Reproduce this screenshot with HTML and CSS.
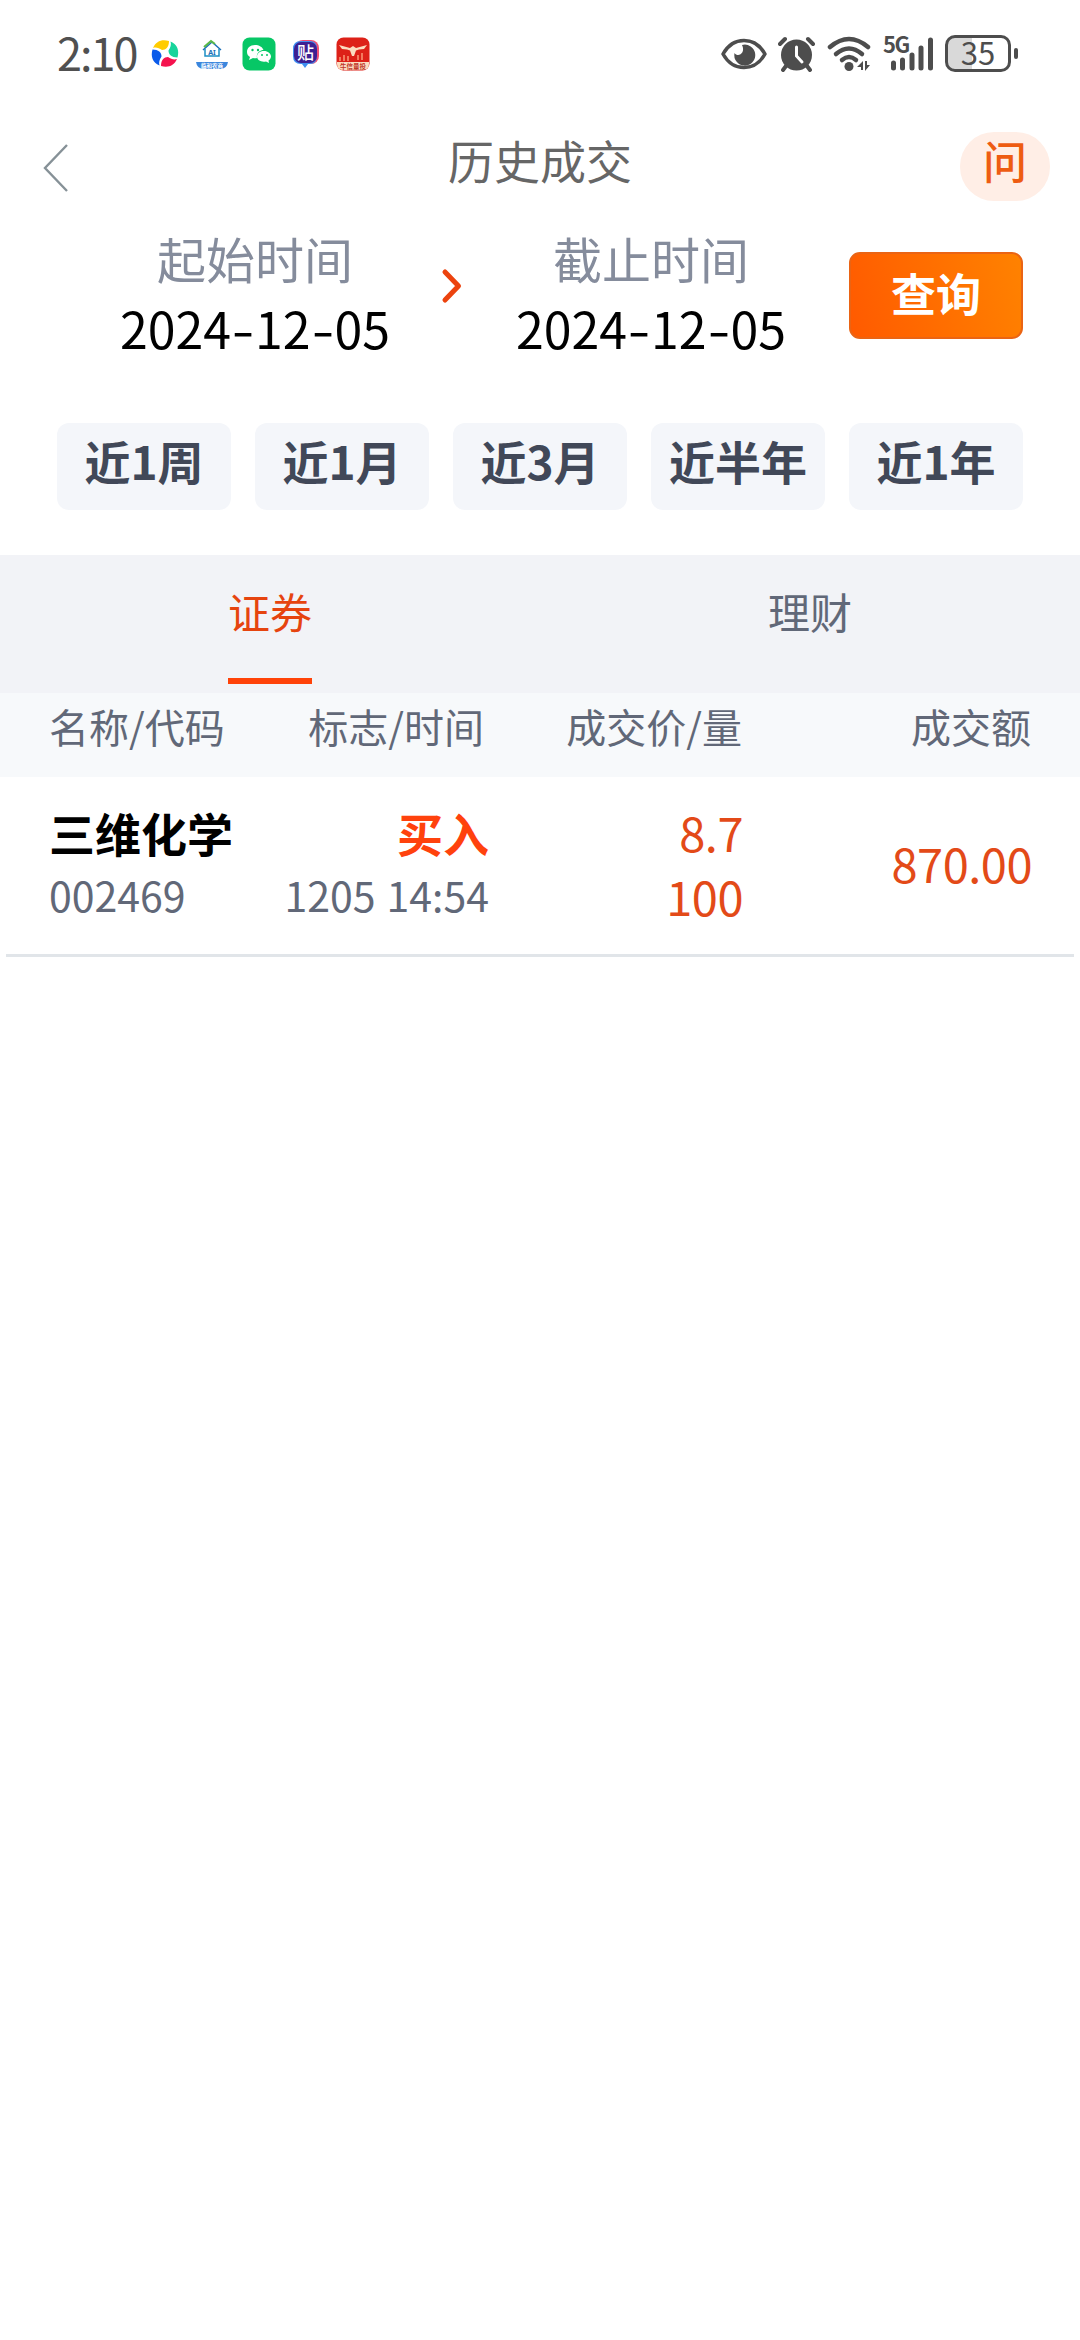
FILE: index.html
```html
<!DOCTYPE html>
<html lang="zh-CN">
<head>
  <meta charset="UTF-8" />
  <title>历史成交</title>
  <meta name="viewport" content="width=device-width, initial-scale=1" />
  <link rel="stylesheet" href="styles.css">
</head>

<body>
  <!-- Status bar -->
  <div class="status-bar">
    <span class="clock">2:10</span>
    <div class="app-icons">
      <svg width="34" height="34" viewBox="0 0 34 34">
        <path d="M5 11C8 4 14 2 21 4C21 10 18 13 14 13C11 11 8 10 5 11Z" fill="#fc0"/>
        <path d="M5 11C8 4 14 2 21 4C21 10 18 13 14 13C11 11 8 10 5 11Z" fill="#17d49b" transform="rotate(90 17 16.500)"/>
        <path d="M5 11C8 4 14 2 21 4C21 10 18 13 14 13C11 11 8 10 5 11Z" fill="#f5134e" transform="rotate(180 17 16.500)"/>
        <path d="M5 11C8 4 14 2 21 4C21 10 18 13 14 13C11 11 8 10 5 11Z" fill="#0a5bea" transform="rotate(270 17 16.500)"/>
      </svg>
      <svg width="34" height="34" viewBox="0 0 34 34">
        <path d="M8 13L17 5L26 13" fill="none" stroke="#1d70b8" stroke-width="1.500"/>
        <path d="M9 10L16 4L20 7" fill="none" stroke="#59b947" stroke-width="2"/>
        <path d="M10 12V19H24V12" fill="none" stroke="#1d8fc4" stroke-width="1.500"/>
        <text x="17" y="17.500" class="ai-text">AI</text>
        <path d="M1 25H33Q32 32 25 32H9Q2 32 1 25Z" fill="#3b86dd"/>
        <text x="17" y="31" class="ai-caption">临和农商</text>
      </svg>
      <svg width="34" height="34" viewBox="0 0 34 34">
        <rect x=".5" y=".5" width="33" height="33" rx="7" fill="#07c766"/>
        <path d="M13 8C8 8 5 11 5 15C5 17 6 19 8 20L7 23L11 21C12 21.300 14 21.300 15 21C14 16 18 13 21.500 13C20.500 10 17 8 13 8Z" fill="#fff"/>
        <path d="M22 14C17.500 14 15 16.500 15 19.500C15 23 19 25.500 24 24.500L27 26L26.500 23.500C28 22.500 29 21 29 19.500C29 16.500 26 14 22 14Z" fill="#fff"/>
        <g fill="#07c766"><circle cx="10.500" cy="13" r="1.200"/><circle cx="16" cy="13" r="1.200"/><circle cx="20" cy="18" r="1"/><circle cx="25" cy="18" r="1"/></g>
      </svg>
      <svg width="34" height="34" viewBox="0 0 34 34">
        <rect x="6" y="3" width="24" height="24" rx="8" fill="#ef4f75"/>
        <path d="M12 4H21Q28 4 28 12V18Q28 27 21 27H19L16 31L13 27H12Q4 27 4 19V12Q4 4 12 4Z" fill="#3f8ff0"/>
        <rect x="5" y="5" width="23" height="21" rx="7" fill="#3d2092"/>
        <text x="16.500" y="21.500" class="tie-text">贴</text>
      </svg>
      <svg width="34" height="34" viewBox="0 0 34 34">
        <rect x=".5" y=".5" width="33" height="33" rx="7" fill="#dd2118"/>
        <path d="M1 25H33V27Q33 33 26 33H8Q1 33 1 27Z" fill="#fbdcc0"/>
        <path d="M3 8L14 11L17 9L20 11L31 8L28 12L23 12.500L20 13.500L18 19H16L14 13.500L11 12.500L6 12Z" fill="#fbdcc0"/>
        <path d="M4 20V24M8 18V24M12 19V24M22 18V23M26 16V23" stroke="#f37a5e" stroke-width="2"/>
        <text x="17" y="31.500" class="bull-text">牛信量投</text>
      </svg>
    </div>
    <div class="system-icons">
      <svg class="eye" width="46" height="34" viewBox="0 0 46 34">
        <path d="M2 17C12 -1 34 -1 44 17C34 35 12 35 2 17Z" fill="none" stroke="#4d4d4d" stroke-width="3.500" stroke-linejoin="round"/>
        <path d="M21 8A10.500 10.500 0 1 1 13.500 16C17 21 25 16 21 8Z" fill="#4d4d4d"/>
      </svg>
      <svg class="alarm" width="38" height="36" viewBox="0 0 38 36">
        <circle cx="18.500" cy="19" r="15.500" fill="#4d4d4d"/>
        <path d="M2 8L7 3M35 8L30 3M8 30L5 34M29 30L32 34" stroke="#4d4d4d" stroke-width="4" stroke-linecap="round"/>
        <path d="M18.500 11V20L24 26" fill="none" stroke="#fff" stroke-width="3" stroke-linecap="round"/>
      </svg>
      <svg class="wifi" width="46" height="36" viewBox="0 0 46 36">
        <g fill="none" stroke="#4d4d4d" stroke-width="4.500" stroke-linecap="round">
          <path d="M3 11Q22 -5 41 11"/>
          <path d="M9 18Q22 7 35 18"/>
          <path d="M15 24Q22 18 29 24"/>
        </g>
        <circle cx="22" cy="30.500" r="4.500" fill="#4d4d4d"/>
        <path d="M36 25V34H34V31H30ZM38 25V35L43 29H40V25Z" fill="#4d4d4d"/>
      </svg>
      <svg class="signal" width="52" height="36" viewBox="0 0 52 36">
        <text x="0" y="16.500" class="net-text">5G</text>
        <path d="M10.500 27V32M19.500 24V32M29 19V32M38 12V32M47.500 4V32" stroke="#4d4d4d" stroke-width="5" stroke-linecap="round"/>
      </svg>
      <div class="battery">35</div>
    </div>
  </div>

  <!-- Title bar -->
  <div class="title-bar">
    <svg class="back" width="28" height="50" viewBox="0 0 28 50">
      <path d="M25 2L3 25L25 48" fill="none" stroke="#869197" stroke-width="2.400"/>
    </svg>
    <h1>历史成交</h1>
    <button class="ask">问</button>
  </div>

  <!-- Date range -->
  <div class="date-range">
    <div class="date">
      <label>起始时间</label>
      <span>2024<i>-</i>12<i>-</i>05</span>
    </div>
    <svg class="arrow" width="22" height="38" viewBox="0 0 22 38">
      <path d="M4 5L17.500 19L4 33" fill="none" stroke="#ec430e" stroke-width="5" stroke-linecap="round" stroke-linejoin="round"/>
    </svg>
    <div class="date">
      <label>截止时间</label>
      <span>2024<i>-</i>12<i>-</i>05</span>
    </div>
    <button class="query">查询</button>
  </div>

  <div class="quick">
    <button>近1周</button>
    <button>近1月</button>
    <button>近3月</button>
    <button>近半年</button>
    <button>近1年</button>
  </div>

  <div class="tabs">
    <div class="tab"><span class="active">证券</span></div>
    <div class="tab"><span>理财</span></div>
  </div>

  <!-- Trades -->
  <div class="row head">
    <div>名称/代码</div>
    <div>标志/时间</div>
    <div>成交价/量</div>
    <div>成交额</div>
  </div>
  <div class="row trade">
    <div>
      <p class="name">三维化学</p>
      <p class="sub">002469</p>
    </div>
    <div>
      <p class="name buy">买入</p>
      <p class="sub">1205 14:54</p>
    </div>
    <div class="deal">
      <p class="num">8.7</p>
      <p class="num">100</p>
    </div>
    <div class="num total">870.00</div>
  </div>
</body>
</html>
```

FILE: styles.css
```css
* {
  box-sizing: border-box;
}

body {
  margin: 0;
  background-color: #fff;
  color: #000;
  font-family: "Noto Sans CJK SC", sans-serif;
}

button {
  border: none;
  padding: 0;
  font-family: inherit;
}

p {
  margin: 0;
}

.status-bar {
  display: flex;
  align-items: center;
  height: 107px;
  padding-left: 57px;
}

.clock {
  width: 84px;
  padding-bottom: 4px;
  font-size: 45px;
  line-height: 60px;
  color: #505050;
  letter-spacing: -2px;
}

.app-icons {
  display: flex;
  gap: 13px;
  margin-left: 7px;
}
.ai-text {
  font: bold 7px "Noto Sans", sans-serif;
  fill: #1d70b8;
  text-anchor: middle;
}
.ai-caption {
  font-size: 5.5px;
  font-weight: bold;
  fill: #fff;
  text-anchor: middle;
}
.tie-text {
  font-size: 17px;
  font-weight: 500;
  fill: #fff;
  text-anchor: middle;
}
.bull-text {
  font-size: 6.5px;
  font-weight: bold;
  fill: #c0372a;
  text-anchor: middle;
}

.system-icons {
  display: flex;
  align-items: center;
  margin-left: auto;
  padding-right: 69px;
}
.alarm { margin-left: 11px; }
.wifi { margin-left: 11px; }
.signal {
  margin-left: 10px;
  overflow: visible;
}
.net-text {
  font: bold 22px "Noto Sans CJK SC", sans-serif;
  fill: #4d4d4d;
  letter-spacing: -1.5px;
}

.battery {
  position: relative;
  width: 66px;
  height: 37px;
  margin-left: 10px;
  border: 3px solid #4d4d4d;
  border-radius: 10px;
  background: linear-gradient(90deg, #d9d9d9 40%, #fff 40%);
  font-size: 31px;
  line-height: 28px;
  text-align: center;
  color: #4d4d4d;
}
.battery::after {
  content: "";
  position: absolute;
  right: -10px;
  top: 10px;
  width: 4px;
  height: 11px;
  border-radius: 2px;
  background-color: #4d4d4d;
}

.title-bar {
  display: grid;
  grid-template-columns: 1fr auto 1fr;
  height: 116px;
  padding: 0 30px 0 42px;
}
.title-bar h1 {
  margin: 20px 0 0 -12px;
  font-size: 46px;
  font-weight: 400;
  line-height: 64px;
  color: #666;
}
.back {
  margin-top: 36px;
}
.ask {
  justify-self: end;
  width: 90px;
  height: 69px;
  margin-top: 25px;
  padding-bottom: 13px;
  border-radius: 34px;
  background-color: #ffeee6;
  color: #ee5c12;
  font-size: 44px;
  font-weight: 500;
  line-height: 54px;
}

.date-range {
  display: flex;
  height: 200px;
  padding-left: 117px;
}
.date {
  width: 276px;
  text-align: center;
}
.date label,
.date span {
  display: block;
  white-space: nowrap;
}
.date label {
  margin-top: 1px;
  font-size: 49px;
  line-height: 68px;
  color: #858c9c;
}
.date span {
  font-size: 50px;
  line-height: 70px;
}
.date i {
  display: inline-block;
  width: 24px;
  font-style: normal;
  transform: scaleX(1.3);
}
.arrow {
  margin: 44px 50px 0 48px;
}
.query {
  width: 174px;
  height: 87px;
  margin: 29px 0 0 60px;
  padding-bottom: 6px;
  border: 2px solid #ea6414;
  border-radius: 11px;
  background: linear-gradient(75deg, #ff5a00, #ff8200);
  color: #fff;
  font-size: 45px;
  font-weight: 700;
  line-height: 60px;
}

.quick {
  display: grid;
  grid-template-columns: repeat(5, 174px);
  gap: 24px;
  height: 132px;
  padding: 0 57px;
}
.quick button {
  height: 87px;
  padding-bottom: 13px;
  border-radius: 12px;
  background-color: #f4f6fa;
  color: #414858;
  font-size: 46px;
  font-weight: 700;
  line-height: 60px;
}

.tabs {
  display: flex;
  height: 138px;
  background-color: #f2f3f7;
}
.tab {
  flex: 1;
  text-align: center;
}
.tab span {
  display: inline-block;
  height: 129px;
  padding-top: 26px;
  font-size: 42px;
  line-height: 60px;
  color: #616878;
}
.tab .active {
  border-bottom: 6px solid #ff4208;
  color: #e6440f;
}

.row {
  display: grid;
  padding: 0 49px;
}
.row > div + div {
  text-align: right;
}

.head {
  grid-template-columns: 193px 242px 258px 289px;
  height: 84px;
  background-color: #f7f9fb;
  color: #616878;
  font-size: 40px;
  line-height: 67px;
}

.trade {
  grid-template-columns: 193px 247px 254px 289px;
  height: 180px;
  margin: 0 6px;
  padding: 25px 43px 0;
  border-bottom: 3px solid #e1e5e9;
}
.name {
  font-size: 46px;
  font-weight: 700;
  line-height: 60px;
}
.buy {
  color: #ff420d;
}
.sub {
  font-size: 41px;
  line-height: 64px;
  word-spacing: 2px;
  color: #616878;
}
.num {
  font-size: 47px;
  line-height: 64px;
  letter-spacing: -0.5px;
  color: #e34a18;
}
.deal {
  margin-top: -2px;
}
.total {
  line-height: 121px;
}
```
